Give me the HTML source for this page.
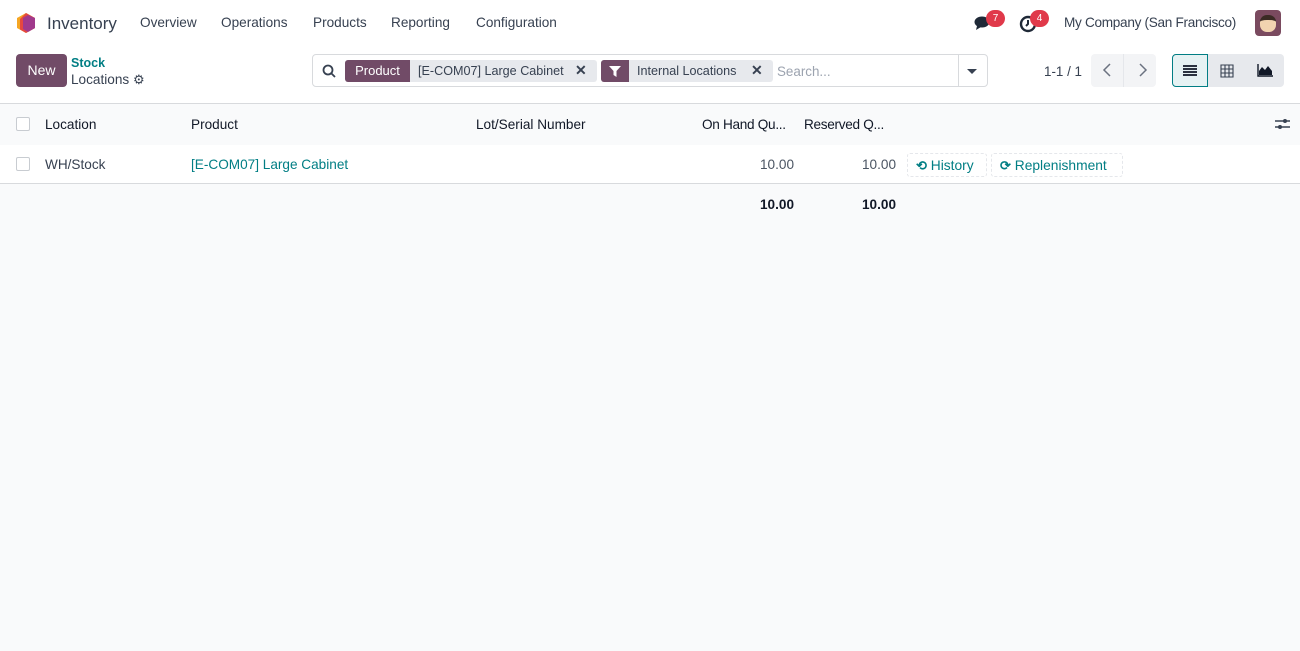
<!DOCTYPE html>
<html><head><meta charset="utf-8"><style>
*{box-sizing:border-box;margin:0;padding:0}
body{width:1300px;height:651px;overflow:hidden;background:#f9fafb;font-family:"Liberation Sans",sans-serif;font-size:13.4px;color:#374151;position:relative}
.abs{position:absolute;white-space:nowrap}
.top{position:absolute;left:0;top:0;width:1300px;height:104px;background:#fff;border-bottom:1px solid #d8dadd}
.nav{top:15px;font-size:13.6px;color:#374151}
.btn{background:#714b67;color:#fff;border-radius:4px}
.tealt{color:#017e84}
.chip{background:#e7e9ed;border-radius:3px}
.hdr{position:absolute;left:0;top:105px;width:1300px;height:39px;background:#f9fafb}
.row{position:absolute;left:0;top:145px;width:1300px;height:39px;background:#fff;border-bottom:1px solid #d8dadd}
.cb{width:14px;height:14px;border:1px solid #c8ccd1;border-radius:2px;background:#fff}
.t{font-size:13.6px}
</style></head><body>
<div class="top"></div>
<svg class="abs" style="left:16px;top:12px" width="20" height="22" viewBox="0 0 20 22"><polygon points="10,1 19,6 19,16 10,21 1,16 1,6" fill="#f5a623"/><polygon points="10,1 19,6 19,16 10,21 4,17.5 4,7" fill="#e5483f"/><polygon points="12,3 19,6 19,16 12,20 7,17 7,6" fill="#a0398c"/></svg>
<div class="abs" style="left:47px;top:14px;font-size:17px;color:#374151">Inventory</div>
<div class="abs nav" style="left:140px">Overview</div>
<div class="abs nav" style="left:221px">Operations</div>
<div class="abs nav" style="left:313px">Products</div>
<div class="abs nav" style="left:391px">Reporting</div>
<div class="abs nav" style="left:476px">Configuration</div>
<svg class="abs" style="left:974px;top:15px" width="20" height="16" viewBox="0 0 20 16"><ellipse cx="8" cy="7" rx="7.5" ry="5.5" fill="#1f2937"/><path d="M3 11 L2 15 L7 12Z" fill="#1f2937"/></svg>
<div class="abs" style="left:986px;top:10px;width:19px;height:17px;border-radius:9px;background:#e0394a;color:#fff;font-size:10px;text-align:center;line-height:17px">7</div>
<svg class="abs" style="left:1019px;top:15px" width="18" height="18" viewBox="0 0 18 18"><circle cx="9" cy="9" r="7" fill="none" stroke="#1f2937" stroke-width="2.4"/><path d="M9 5v4l-2 2" stroke="#1f2937" stroke-width="2" fill="none"/></svg>
<div class="abs" style="left:1030px;top:10px;width:19px;height:17px;border-radius:9px;background:#e0394a;color:#fff;font-size:10px;text-align:center;line-height:17px">4</div>
<div class="abs" style="left:1064px;top:15px;font-size:13.6px;letter-spacing:-0.3px">My Company (San Francisco)</div>
<div class="abs" style="left:1255px;top:10px;width:26px;height:26px;border-radius:4px;background:#7a4a5f"><div style="margin:5px 5px;width:16px;height:17px;border-radius:7px;background:#f1d3b0;border-top:5px solid #3a2a24"></div></div>

<div class="abs btn" style="left:16px;top:54px;width:51px;height:33px;line-height:33px;text-align:center;font-size:14px">New</div>
<div class="abs tealt" style="left:71px;top:56px;font-size:12.5px;font-weight:bold">Stock</div>
<div class="abs" style="left:71px;top:72px;font-size:13.6px">Locations <span style="font-size:13px;color:#374151">⚙</span></div>

<div class="abs" style="left:312px;top:54px;width:676px;height:33px;border:1px solid #d8dadd;border-radius:4px;background:#fff"></div>
<svg class="abs" style="left:322px;top:64px" width="14" height="14" viewBox="0 0 14 14"><circle cx="6" cy="6" r="4.5" fill="none" stroke="#374151" stroke-width="1.8"/><path d="M9.5 9.5L13 13" stroke="#374151" stroke-width="1.8"/></svg>
<div class="abs chip" style="left:345px;top:60px;width:252px;height:22px"></div>
<div class="abs btn" style="left:345px;top:60px;width:65px;height:22px;line-height:22px;text-align:center;font-size:13px;border-radius:3px 0 0 3px">Product</div>
<div class="abs" style="left:418px;top:64px;font-size:12.6px">[E-COM07] Large Cabinet</div>
<div class="abs" style="left:575px;top:62px;font-size:14px;font-weight:bold;color:#374151">✕</div>
<div class="abs chip" style="left:601px;top:60px;width:172px;height:22px"></div>
<div class="abs btn" style="left:601px;top:60px;width:28px;height:22px;border-radius:3px 0 0 3px"><svg style="margin:6px 8px" width="12" height="11" viewBox="0 0 12 11"><path d="M0 0H12L7.5 5V11L4.5 9V5Z" fill="#fff"/></svg></div>
<div class="abs" style="left:637px;top:64px;font-size:12.6px">Internal Locations</div>
<div class="abs" style="left:751px;top:62px;font-size:14px;font-weight:bold">✕</div>
<div class="abs" style="left:777px;top:64px;font-size:13.4px;color:#9ca3af">Search...</div>
<div class="abs" style="left:958px;top:55px;width:1px;height:31px;background:#d8dadd"></div>
<div class="abs" style="left:967px;top:69px;width:0;height:0;border-left:5px solid transparent;border-right:5px solid transparent;border-top:5px solid #374151"></div>

<div class="abs" style="left:1044px;top:64px;font-size:13.4px">1-1 / 1</div>
<div class="abs" style="left:1091px;top:54px;width:65px;height:33px;background:#f3f4f6;border-radius:4px"></div>
<div class="abs" style="left:1123px;top:54px;width:1px;height:33px;background:#e5e7eb"></div>
<svg class="abs" style="left:1100px;top:62px" width="50" height="16" viewBox="0 0 50 16"><path d="M10 2L4 8L10 14M40 2L46 8L40 14" stroke="#6b7280" stroke-width="1.5" fill="none"/></svg>
<div class="abs" style="left:1172px;top:54px;width:112px;height:33px;background:#e7e9ed;border-radius:4px"></div>
<div class="abs" style="left:1172px;top:54px;width:36px;height:33px;background:#e6f2f3;border:1px solid #017e84;border-radius:4px 0 0 4px"></div>
<svg class="abs" style="left:1183px;top:65px" width="14" height="11" viewBox="0 0 14 11"><path d="M0 1H14M0 4H14M0 7H14M0 10H14" stroke="#111827" stroke-width="1.7"/></svg>
<svg class="abs" style="left:1220px;top:64px" width="14" height="14" viewBox="0 0 14 14"><path d="M1 1H13V13H1ZM1 5H13M1 9H13M5 1V13M9 1V13" stroke="#374151" stroke-width="1.1" fill="none"/></svg>
<svg class="abs" style="left:1257px;top:64px" width="16" height="13" viewBox="0 0 16 13"><path d="M1 0V12H16" stroke="#111827" stroke-width="1.4" fill="none"/><path d="M2 11V7L5 3L8 6L11 2L15 7V11Z" fill="#111827"/></svg>

<div class="hdr"></div>
<div class="abs cb" style="left:16px;top:117px"></div>
<div class="abs t" style="left:45px;top:117px;color:#111827">Location</div>
<div class="abs t" style="left:191px;top:117px;color:#111827">Product</div>
<div class="abs t" style="left:476px;top:117px;color:#111827">Lot/Serial Number</div>
<div class="abs t" style="left:702px;top:117px;color:#111827;letter-spacing:-0.3px">On Hand Qu...</div>
<div class="abs t" style="left:804px;top:117px;color:#111827;letter-spacing:-0.3px">Reserved Q...</div>
<svg class="abs" style="left:1275px;top:117px" width="15" height="14" viewBox="0 0 15 14"><path d="M0 4H15M0 10H15" stroke="#374151" stroke-width="1.4"/><circle cx="10" cy="4" r="2" fill="#374151"/><circle cx="5" cy="10" r="2" fill="#374151"/></svg>

<div class="row"></div>
<div class="abs cb" style="left:16px;top:157px"></div>
<div class="abs t" style="left:45px;top:157px">WH/Stock</div>
<div class="abs tealt t" style="left:191px;top:157px">[E-COM07] Large Cabinet</div>
<div class="abs t" style="left:760px;top:157px;color:#4b5563">10.00</div>
<div class="abs t" style="left:862px;top:157px;color:#4b5563">10.00</div>
<div class="abs tealt" style="left:907px;top:153px;width:80px;height:24px;border:1px dashed #e5e7eb;border-radius:3px;padding:4px 0 0 8px;font-size:13.8px"><b style="font-size:13px">⟲</b> History</div>
<div class="abs tealt" style="left:991px;top:153px;width:132px;height:24px;border:1px dashed #e5e7eb;border-radius:3px;padding:4px 0 0 8px;font-size:13.8px"><b style="font-size:13px">⟳</b> Replenishment</div>

<div class="abs t" style="left:760px;top:197px;font-weight:bold;color:#111827">10.00</div>
<div class="abs t" style="left:862px;top:197px;font-weight:bold;color:#111827">10.00</div>
</body></html>
